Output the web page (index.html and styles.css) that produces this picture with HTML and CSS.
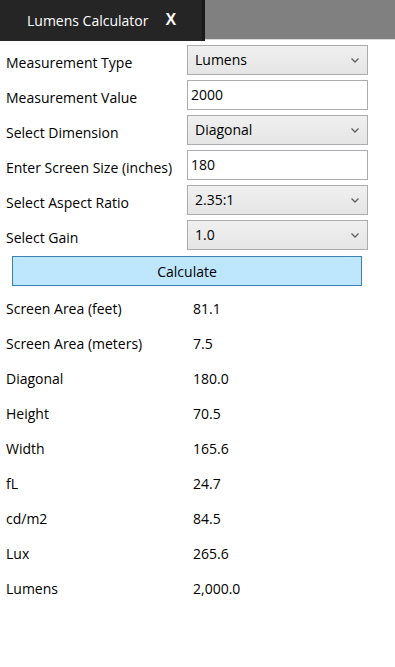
FILE: index.html
```html
<!DOCTYPE html>
<html lang="en">
<head>
  <meta charset="UTF-8">
  <meta name="viewport" content="width=device-width, initial-scale=1.0">
  <title>Lumens Calculator</title>
  <link rel="stylesheet" href="styles.css">
</head>
<body>
  <!-- Tab strip -->
  <header class="tabbar">
    <div class="tab">
      <span class="tab-title">Lumens Calculator</span>
      <span class="tab-close">X</span>
    </div>
    <div class="tab-fill"></div>
  </header>

  <form class="calc-form">
    <label class="field-label">Measurement Type</label>
    <div class="combo">
      <span>Lumens</span>
      <svg class="chevron" width="8" height="5" viewBox="0 0 8 5"><path d="M0.5 0.5 L4 4 L7.5 0.5" fill="none" stroke="#5f5f5f" stroke-width="1.3"/></svg>
    </div>

    <label class="field-label">Measurement Value</label>
    <input class="text-input" type="text" value="2000">

    <label class="field-label">Select Dimension</label>
    <div class="combo">
      <span>Diagonal</span>
      <svg class="chevron" width="8" height="5" viewBox="0 0 8 5"><path d="M0.5 0.5 L4 4 L7.5 0.5" fill="none" stroke="#5f5f5f" stroke-width="1.3"/></svg>
    </div>

    <label class="field-label">Enter Screen Size (inches)</label>
    <input class="text-input" type="text" value="180">

    <label class="field-label">Select Aspect Ratio</label>
    <div class="combo">
      <span>2.35:1</span>
      <svg class="chevron" width="8" height="5" viewBox="0 0 8 5"><path d="M0.5 0.5 L4 4 L7.5 0.5" fill="none" stroke="#5f5f5f" stroke-width="1.3"/></svg>
    </div>

    <label class="field-label">Select Gain</label>
    <div class="combo">
      <span>1.0</span>
      <svg class="chevron" width="8" height="5" viewBox="0 0 8 5"><path d="M0.5 0.5 L4 4 L7.5 0.5" fill="none" stroke="#5f5f5f" stroke-width="1.3"/></svg>
    </div>
  </form>

  <button type="button" class="calc-btn">Calculate</button>

  <div class="results">
    <div class="result-label">Screen Area (feet)</div><div class="result-value">81.1</div>
    <div class="result-label">Screen Area (meters)</div><div class="result-value">7.5</div>
    <div class="result-label">Diagonal</div><div class="result-value">180.0</div>
    <div class="result-label">Height</div><div class="result-value">70.5</div>
    <div class="result-label">Width</div><div class="result-value">165.6</div>
    <div class="result-label">fL</div><div class="result-value">24.7</div>
    <div class="result-label">cd/m2</div><div class="result-value">84.5</div>
    <div class="result-label">Lux</div><div class="result-value">265.6</div>
    <div class="result-label">Lumens</div><div class="result-value">2,000.0</div>
  </div>
</body>
</html>
```

FILE: styles.css
```css
* {
  margin: 0;
  padding: 0;
  box-sizing: border-box;
  font-family: 'Open Sans', 'Noto Sans', sans-serif;
}

body {
  background-color: #ffffff;
  color: #000000;
  font-size: 14px;
  width: 395px;
  min-height: 667px;
}

/* Tab strip */
.tabbar {
  display: flex;
  align-items: flex-start;
  height: 41px;
}

.tab {
  width: 205px;
  height: 41px;
  background-color: #252525;
  border-right: 3px solid #1a1a1a;
  display: flex;
  align-items: center;
  gap: 17px;
  padding-left: 27px;
  padding-bottom: 1px;
  color: #ffffff;
}

.tab-title {
  font-size: 14px;
}

.tab-close {
  font-family: 'Liberation Sans', Arial, sans-serif;
  font-weight: 700;
  font-size: 16px;
}

.tab-fill {
  flex: 1;
  height: 40px;
  background-color: #808080;
  border-bottom: 1px solid #dadada;
}

/* Form */
.calc-form {
  display: grid;
  grid-template-columns: 181px 181px;
  grid-auto-rows: 30px;
  row-gap: 5px;
  padding: 4px 0 0 6px;
}

.field-label {
  display: flex;
  align-items: center;
  padding-top: 4px;
  white-space: nowrap;
}

.combo {
  display: flex;
  align-items: center;
  justify-content: space-between;
  border: 1px solid #acacac;
  background: linear-gradient(#f0f0f0, #e5e5e5);
  padding: 0 8px 1px 7px;
}

.chevron {
  flex-shrink: 0;
  margin-top: 1px;
}

.text-input {
  border: 1px solid #abadb3;
  background-color: #ffffff;
  padding: 0 3px 2px;
  font-size: 14px;
  color: #000000;
  outline: none;
  width: 181px;
  height: 30px;
}

.calc-btn {
  display: block;
  margin: 6px 0 0 12px;
  width: 350px;
  height: 30px;
  background-color: #bee6fd;
  border: 1px solid #3c7fb1;
  font-size: 14px;
  color: #000000;
  cursor: pointer;
}

/* Results */
.results {
  display: grid;
  grid-template-columns: 187px 1fr;
  grid-auto-rows: 35px;
  padding: 5px 0 0 6px;
}

.result-label,
.result-value {
  display: flex;
  align-items: center;
}
```
